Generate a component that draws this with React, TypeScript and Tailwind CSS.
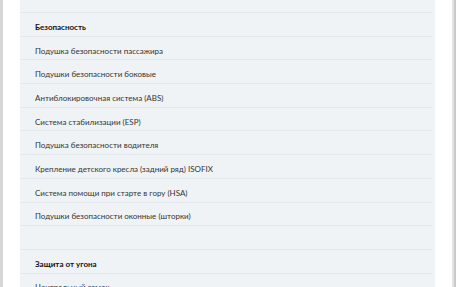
const safety = [
  "Подушка безопасности пассажира",
  "Подушки безопасности боковые",
  "Антиблокировочная система (ABS)",
  "Система стабилизации (ESP)",
  "Подушка безопасности водителя",
  "Крепление детского кресла (задний ряд) ISOFIX",
  "Система помощи при старте в гору (HSA)",
  "Подушки безопасности оконные (шторки)",
];

const antiTheft = ["Центральный замок"];

function Row({ children, bold }: { children?: React.ReactNode; bold?: boolean }) {
  return (
    <div
      className={
        "h-[23.7px] flex items-center pt-[5px] pl-[15px] border-b border-[#e3e8ec] text-[8px] " +
        (bold ? "font-bold text-[#111]" : "text-[#333]")
      }
    >
      {children}
    </div>
  );
}

export default function App() {
  return (
    <div
      className="w-[456px] h-[287px] overflow-hidden bg-white flex"
      style={{ fontFamily: "Lato, 'Open Sans', sans-serif" }}
    >
      {/* window edges */}
      <div className="w-[3px] bg-[#d6d6d6]" />
      <div className="w-[17px]" />

      {/* feature list panel */}
      <div className="w-[415px] bg-[#eff3f6] pr-[3px]">
        <div className="h-[13px] border-b border-[#e3e8ec]" />
        <Row bold>Безопасность</Row>
        {safety.map((s) => (
          <Row key={s}>{s}</Row>
        ))}
        <Row />
        <Row bold>Защита от угона</Row>
        {antiTheft.map((s) => (
          <Row key={s}>{s}</Row>
        ))}
      </div>

      <div className="w-[17px]" />
      <div className="w-[2px] bg-[#e2e2e2]" />
      <div className="w-[2px] bg-[#c9c9c9]" />
    </div>
  );
}
